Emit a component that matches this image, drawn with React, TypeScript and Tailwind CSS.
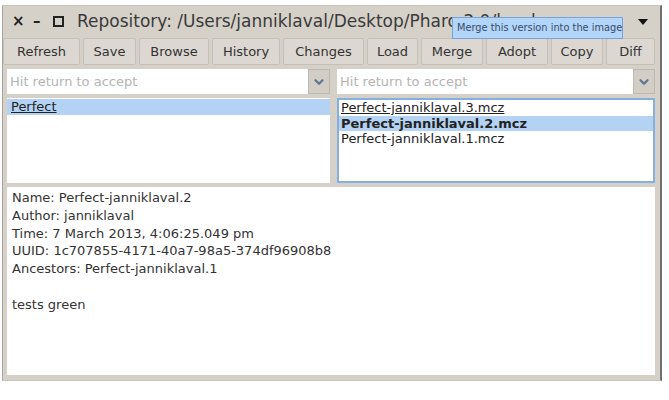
import { ChevronDown } from 'lucide-react'

const buttons: [string, number][] = [
  ['Refresh', 77],
  ['Save', 53],
  ['Browse', 70],
  ['History', 68],
  ['Changes', 81],
  ['Load', 51],
  ['Merge', 62],
  ['Adopt', 62],
  ['Copy', 52],
  ['Diff', 49],
]

const details = [
  'Name: Perfect-janniklaval.2',
  'Author: janniklaval',
  'Time: 7 March 2013, 4:06:25.049 pm',
  'UUID: 1c707855-4171-40a7-98a5-374df96908b8',
  'Ancestors: Perfect-janniklaval.1',
  '',
  'tests green',
]

function Combo({ width }: { width: number }) {
  return (
    <div className="flex h-[25px]" style={{ width }}>
      <div className="flex flex-1 items-center bg-white pl-[3px] text-[13px] text-[#b4b4b4]">
        Hit return to accept
      </div>
      <div className="flex w-[22px] items-center justify-center border border-[#bdb8b0] bg-[#d2cdc5]">
        <ChevronDown className="h-[14px] w-[14px] text-[#637896]" strokeWidth={4} />
      </div>
    </div>
  )
}

export default function App() {
  return (
    <div className="h-[400px] w-[669px] bg-white pl-[2px] pt-[5px] font-['DejaVu_Sans',sans-serif]">
      <div className="relative flex h-[376px] w-[660px] flex-col border-t border-l border-b border-t-[#c8c4bc] border-l-[#a8a49e] border-b-[#c8c4bc] border-r-2 border-r-[#707070] bg-[#d5d1c9]">
        {/* Title bar */}
        <div className="flex h-[31px] items-center overflow-hidden pl-[9px] pr-[12px]">
          <span className="w-[17px] text-[15px] font-bold leading-none text-[#222]">×</span>
          <span className="ml-[4px] w-[14px] text-[15px] font-bold leading-none text-[#222]">–</span>
          <span className="ml-[6px] h-[11px] w-[11px] border-2 border-[#222]" />
          <span className="ml-[13px] flex-1 whitespace-nowrap text-[17px] text-[#3a3a3a]">
            Repository: /Users/janniklaval/Desktop/Pharo 2.0/local
          </span>
          <svg width="10" height="6" viewBox="0 0 10 6" className="ml-2 shrink-0">
            <path d="M0 0 H10 L5 6 Z" fill="#111" />
          </svg>
        </div>

        {/* Tooltip */}
        <div className="absolute left-[449px] top-[11px] flex h-[22px] w-[171px] items-center whitespace-nowrap border border-[#7aa2d6] bg-[#b2d5fa] pl-[4px] font-['DejaVu_Sans_Condensed','DejaVu_Sans',sans-serif] text-[10.9px] text-[#3b4b66]">
          Merge this version into the image
        </div>

        {/* Buttons */}
        <div className="mt-[1px] flex h-[27px] gap-[3px]">
          {buttons.map(([label, w]) => (
            <div
              key={label}
              className="flex items-center justify-center rounded-[2px] border border-[#c4bfb7] bg-[#dcd8d1] text-[13px] text-[#333]"
              style={{ width: w }}
            >
              {label}
            </div>
          ))}
        </div>

        {/* Inputs */}
        <div className="mt-[4px] flex gap-[7px] pl-[4px]">
          <Combo width={323} />
          <Combo width={318} />
        </div>

        {/* Lists */}
        <div className="mt-[4px] flex h-[85px] gap-[7px] pl-[4px]">
          <div className="w-[323px] bg-white pt-px text-[13px] leading-[15.5px] text-[#222]">
            <div className="bg-[#b4d3f4] pl-[4px] underline">Perfect</div>
          </div>
          <div className="w-[318px] border-2 border-[#84afe0] bg-white text-[13px] leading-[15.5px] text-[#222]">
            <div className="pl-[2px] underline">Perfect-janniklaval.3.mcz</div>
            <div className="bg-[#b4d3f4] pl-[2px] font-bold">Perfect-janniklaval.2.mcz</div>
            <div className="pl-[2px]">Perfect-janniklaval.1.mcz</div>
          </div>
        </div>

        {/* Details */}
        <div className="ml-[4px] mt-[4px] h-[188px] w-[648px] bg-white pl-[5px] pt-[2px] text-[13px] leading-[17.8px] text-[#333]">
          {details.map((line, i) => (
            <div key={i} className="h-[17.8px]">
              {line}
            </div>
          ))}
        </div>
      </div>
    </div>
  )
}
